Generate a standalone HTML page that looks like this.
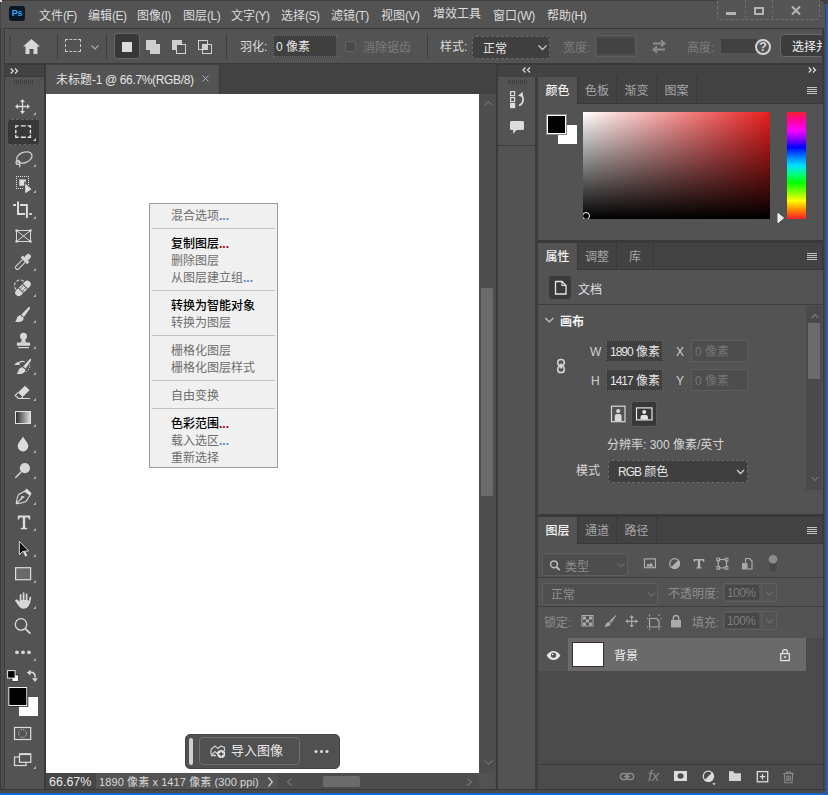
<!DOCTYPE html>
<html lang="zh-CN">
<head>
<meta charset="utf-8">
<title>Photoshop</title>
<style>
*{box-sizing:border-box;margin:0;padding:0}
html,body{width:828px;height:795px;overflow:hidden;background:#424242}
body{position:relative;font-family:"Liberation Sans","Noto Sans CJK SC",sans-serif;font-size:12px;color:#dcdcdc;line-height:1}
.a{position:absolute}
.t{position:absolute;white-space:nowrap;line-height:14px;height:14px}
.dim{color:#8c8c8c}
.l{letter-spacing:-0.5px}
.n{letter-spacing:-1px}
.p{background:#535353}
.d{background:#424242}
.sep{position:absolute;width:1px;background:#3d3d3d}
.hl{position:absolute;height:1px;background:#3d3d3d}
svg{position:absolute;overflow:visible}
.tab{position:absolute;height:27px;border-right:1px solid #383838;color:#a6a6a6;text-align:center;line-height:28px}
.tab.on{background:#535353;color:#f4f4f4;font-weight:500}
.inp{position:absolute;background:#3f3f3f;border:1px solid #6a6a6a;color:#e6e6e6;line-height:14px;padding-top:4px;padding-left:3px;white-space:nowrap;overflow:hidden}
.inp.off{background:#4d4d4d;border-color:#5e5e5e;color:#757575}
.dd{position:absolute;background:#3f3f3f;border:1px solid #666;border-radius:3px;color:#e6e6e6;white-space:nowrap;line-height:14px;padding-top:4px}
.mi{position:absolute;left:21px;white-space:nowrap;height:14px;line-height:14px;color:#000;font-size:12px}
.mi{font-weight:500}
.mi.g{color:#6d6d6d;font-weight:400}
.ms{position:absolute;left:2px;right:2px;height:1px;background:#c4c4c4}
.tri{position:absolute;width:0;height:0;border-left:3px solid transparent;border-bottom:3px solid #b8b8b8}
</style>
</head>
<body>

<!-- ===== menu bar ===== -->
<div class="a p" id="menubar" style="left:0;top:0;width:825px;height:28px;border-top:1px solid #404040;border-left:1px solid #454545;border-top-right-radius:5px"></div>
<div class="a" style="left:0;top:0;width:2px;height:2px;background:#d8d8d8"></div>
<div class="a" style="left:9px;top:6px;width:16px;height:15px;background:#0a1826;border-radius:3px;color:#31a8ff;font-size:9px;font-weight:bold;line-height:15px;text-align:center;letter-spacing:-0.3px">Ps</div>
<div class="t" style="left:39px;top:9px">文件<span class="l">(F)</span></div>
<div class="t" style="left:88px;top:9px">编辑<span class="l">(E)</span></div>
<div class="t" style="left:137px;top:9px">图像<span class="l">(I)</span></div>
<div class="t" style="left:183px;top:9px">图层<span class="l">(L)</span></div>
<div class="t" style="left:231px;top:9px">文字<span class="l">(Y)</span></div>
<div class="t" style="left:281px;top:9px">选择<span class="l">(S)</span></div>
<div class="t" style="left:331px;top:9px">滤镜<span class="l">(T)</span></div>
<div class="t" style="left:381px;top:9px">视图<span class="l">(V)</span></div>
<div class="t" style="left:433px;top:7px">增效工具</div>
<div class="t" style="left:493px;top:9px">窗口<span class="l">(W)</span></div>
<div class="t" style="left:547px;top:9px">帮助<span class="l">(H)</span></div>
<!-- window controls -->
<div class="a" style="left:717px;top:-4px;width:103px;height:24px;background:#555;border:1px dashed #727272;border-radius:4px"></div>
<div class="a" style="left:745px;top:0;width:1px;height:19px;border-left:1px dashed #6e6e6e"></div>
<div class="a" style="left:772px;top:0;width:1px;height:19px;border-left:1px dashed #6e6e6e"></div>
<div class="a" style="left:726px;top:12px;width:10px;height:3px;background:#b4b4b4"></div>
<div class="a" style="left:754px;top:7px;width:10px;height:8px;border:2px solid #b4b4b4"></div>
<svg style="left:791px;top:6px" width="10" height="9" viewBox="0 0 10 9"><path d="M1 0.5 L9 8.5 M9 0.5 L1 8.5" stroke="#b4b4b4" stroke-width="2" fill="none"/></svg>

<!-- ===== options bar ===== -->
<div class="a" style="left:0;top:28px;width:828px;height:1px;background:#3a3a3a"></div>
<div class="a p" id="optbar" style="left:5px;top:29px;width:817px;height:34px"></div>
<div class="a" style="left:9px;top:37px;width:2px;height:20px;background:repeating-linear-gradient(#3c3c3c 0 1px,transparent 1px 2px)"></div>
<svg style="left:23px;top:39px" width="17" height="15" viewBox="0 0 17 15"><path d="M8.5 0 L17 7.5 L14.5 7.5 L14.5 15 L10.5 15 L10.5 10 L6.5 10 L6.5 15 L2.5 15 L2.5 7.5 L0 7.5 Z" fill="#d6d6d6"/></svg>
<div class="sep" style="left:57px;top:34px;height:25px"></div>
<div class="a" style="left:65px;top:39px;width:16px;height:13px;border:1.5px dashed #c8c8c8"></div>
<svg style="left:91px;top:45px" width="8" height="5" viewBox="0 0 8 5"><path d="M0.5 0.5 L4 4 L7.5 0.5" stroke="#a8a8a8" stroke-width="1.2" fill="none"/></svg>
<div class="sep" style="left:106px;top:34px;height:25px"></div>
<div class="a" style="left:114px;top:33px;width:26px;height:26px;background:#383838;border:1px solid #666;border-radius:3px"></div>
<div class="a" style="left:122px;top:42px;width:10px;height:10px;background:#dcdcdc"></div>
<!-- add -->
<div class="a" style="left:146px;top:40px;width:10px;height:10px;background:#cfcfcf"></div>
<div class="a" style="left:150px;top:44px;width:10px;height:10px;background:#cfcfcf"></div>
<!-- subtract -->
<div class="a" style="left:172px;top:40px;width:10px;height:10px;background:#cfcfcf"></div>
<div class="a" style="left:176px;top:44px;width:10px;height:10px;background:#535353;border:1.5px solid #cfcfcf"></div>
<!-- intersect -->
<div class="a" style="left:198px;top:40px;width:10px;height:10px;border:1.5px solid #cfcfcf"></div>
<div class="a" style="left:202px;top:44px;width:10px;height:10px;border:1.5px solid #cfcfcf"></div>
<div class="a" style="left:202px;top:44px;width:6px;height:6px;background:#cfcfcf"></div>
<div class="sep" style="left:226px;top:34px;height:25px"></div>
<div class="t" style="left:240px;top:40px">羽化:</div>
<div class="inp" style="left:273px;top:35px;width:64px;height:22px;border-style:dotted;padding-top:4px;padding-left:2px">0 像素</div>
<div class="a" style="left:345px;top:41px;width:11px;height:11px;background:#4a4a4a;border:1px solid #646464;border-radius:2px"></div>
<div class="t dim" style="left:363px;top:41px;color:#7c7c7c">消除锯齿</div>
<div class="sep" style="left:427px;top:34px;height:25px"></div>
<div class="t" style="left:440px;top:40px">样式:</div>
<div class="dd" style="left:472px;top:36px;width:78px;height:23px;border:1px dashed #6c6c6c;border-radius:4px;padding-top:5px;padding-left:10px">正常</div>
<svg style="left:538px;top:45px" width="9" height="6" viewBox="0 0 9 6"><path d="M0.5 0.5 L4.5 4.5 L8.5 0.5" stroke="#c8c8c8" stroke-width="1.3" fill="none"/></svg>
<div class="t dim" style="left:563px;top:41px;color:#7c7c7c">宽度:</div>
<div class="a" style="left:595px;top:35px;width:42px;height:22px;background:#4e4e4e;border:1px solid #5e5e5e"></div>
<div class="a" style="left:597px;top:38px;width:37px;height:16px;background:#434343"></div>
<svg style="left:651px;top:40px" width="16" height="13" viewBox="0 0 16 13"><path d="M2 3.5 H13 M10 0.5 L13.5 3.5 L10 6.5 M14 9.5 H3 M6 6.5 L2.5 9.5 L6 12.5" stroke="#8c8c8c" stroke-width="2" fill="none"/></svg>
<div class="t dim" style="left:687px;top:41px;color:#7c7c7c">高度:</div>
<div class="a" style="left:721px;top:39px;width:36px;height:14px;background:#414141"></div>
<div class="a" style="left:755px;top:39px;width:16px;height:16px;border:2px solid #d4d4d4;border-radius:50%;color:#d4d4d4;font-weight:bold;font-size:13px;line-height:12px;text-align:center">?</div>
<div class="a" style="left:780px;top:34px;width:50px;height:23px;background:#3c3c3c;border:1px solid #686868;border-radius:4px;color:#f0f0f0;line-height:14px;padding-top:5px;padding-left:11px;white-space:nowrap;overflow:hidden;font-size:12px">选择并遮住</div>
<div class="a" style="left:822px;top:28px;width:6px;height:767px;background:#4a4a4a;border-left:2px solid #3a3a3a"></div>
<div class="a" style="left:0;top:28px;width:5px;height:767px;background:#4d4d4d;border-left:1px solid #3a3a3a;border-right:1px solid #3c3c3c"></div>

<!-- ===== left toolbar ===== -->
<div class="a" style="left:5px;top:63px;width:817px;height:2px;background:#3a3a3a"></div>
<div class="a" style="left:5px;top:65px;width:39px;height:11px;background:#424242"></div>
<div class="a" style="left:5px;top:76px;width:39px;height:1px;background:#3a3a3a"></div>
<div class="a" style="left:44px;top:65px;width:2px;height:724px;background:#3a3a3a"></div>
<svg style="left:9.5px;top:67.5px" width="9" height="6" viewBox="0 0 9 6"><path d="M0.7 0.5 L3.2 3 L0.7 5.5 M5 0.5 L7.5 3 L5 5.5" stroke="#e0e0e0" stroke-width="1.2" fill="none"/></svg>
<div class="a p" id="toolbar" style="left:5px;top:77px;width:39px;height:712px"></div>
<div class="a" style="left:14px;top:80px;width:20px;height:4px;background:repeating-linear-gradient(90deg,#3e3e3e 0 1px,transparent 1px 2px)"></div>
<div class="a" style="left:8px;top:119px;width:31px;height:26px;background:#383838;border-top:1px dashed #666;border-bottom:1px dashed #666;border-radius:3px"></div>
<div class="a" style="left:15px;top:411px;width:16px;height:13px;border:1px solid #e2e2e2;background:linear-gradient(to right,#303030,#d8d8d8)"></div>
<svg id="toolsvg" style="left:0;top:0" width="50" height="795" viewBox="0 0 50 795" fill="none" stroke="none">
<g fill="#aaaaaa">
<path d="M36 112v3h-3z"/><path d="M36 138v3h-3z" fill="#d0d0d0"/><path d="M36 164v3h-3z"/><path d="M36 190v3h-3z"/><path d="M36 216v3h-3z"/>
<path d="M36 268v3h-3z"/><path d="M36 294v3h-3z"/><path d="M36 320v3h-3z"/><path d="M36 346v3h-3z"/><path d="M36 372v3h-3z"/><path d="M36 398v3h-3z"/>
<path d="M36 424v3h-3z"/><path d="M36 450v3h-3z"/><path d="M36 476v3h-3z"/><path d="M36 502v3h-3z"/><path d="M36 528v3h-3z"/><path d="M36 554v3h-3z"/>
<path d="M36 580v3h-3z"/><path d="M36 606v3h-3z"/><path d="M36 658v3h-3z"/><path d="M36 766v3h-3z"/>
</g>
<!-- move -->
<g stroke="#d8d8d8" stroke-width="1.300"><path d="M16.500 106.500H28.500M22.500 100.500V112.500"/></g>
<g fill="#d8d8d8"><path d="M22.500 99l2.500 3h-5zM22.500 114l2.500-3h-5zM15 106.500l3-2.500v5zM30 106.500l-3-2.500v5z"/></g>
<!-- marquee -->
<path d="M15.800 128v-2.100h2.800M27.600 125.900h2.800v2.100M30.400 135.100v2.100h-2.800M18.600 137.200h-2.800v-2.100M20.800 125.900h5M20.800 137.200h5M15.800 129.800v3.600M30.400 129.800v3.600" stroke="#e6e6e6" stroke-width="1.350"/>
<!-- lasso -->
<g stroke="#cfcfcf" stroke-width="1.300"><ellipse cx="24.300" cy="157.500" rx="8" ry="5.200" transform="rotate(-22 24.300 157.500)"/><circle cx="18" cy="162.500" r="1.900"/><path d="M19 164.200c1.200 0.800 1.200 2 0.300 3"/></g>
<!-- object select -->
<g stroke="#e6e6e6" stroke-width="1" stroke-dasharray="1 1" shape-rendering="crispEdges"><path d="M16 176.500h13M16 188.500h8M16.500 176v13M28.500 176v9"/></g>
<path d="M19.300 179.400h6.500v6.400h-6.500z" fill="#dcdcdc"/>
<path d="M25.200 183.600l6.300 5.700l-6.300 3.900z" fill="#dcdcdc" stroke="#535353" stroke-width="2" paint-order="stroke"/>
<!-- crop -->
<path d="M18 201.400v12.500h7M13.200 205h2.800M20 205h6.900v13M29.200 213.900h2.600" stroke="#dcdcdc" stroke-width="2"/>
<!-- frame -->
<g stroke="#d8d8d8" stroke-width="1"><rect x="16.500" y="230.500" width="14" height="11"/><path d="M16.500 230.500l14 11M30.500 230.500l-14 11"/></g>
<g fill="#d8d8d8"><rect x="15.400" y="229.400" width="2.200" height="2.200"/><rect x="29.400" y="229.400" width="2.200" height="2.200"/><rect x="15.400" y="240.400" width="2.200" height="2.200"/><rect x="29.400" y="240.400" width="2.200" height="2.200"/></g>
<!-- eyedropper -->
<g transform="translate(25 259.800) rotate(45)"><path d="M-1.900 1.500v9.300a1.900 1.900 0 0 0 3.800 0v-9.300" stroke="#d4d4d4" stroke-width="1.100"/><rect x="-4.600" y="-1.600" width="9.200" height="3.200" fill="#d4d4d4"/><rect x="-2.500" y="-7.200" width="5" height="6.500" rx="2.400" fill="#d4d4d4"/></g>
<!-- heal -->
<g transform="translate(23 288.400) rotate(-45)"><rect x="-9.500" y="-3.500" width="19" height="7" rx="3.500" fill="#d8d8d8"/><rect x="-3.300" y="-3.600" width="1" height="7.200" fill="#535353"/><rect x="2.300" y="-3.600" width="1" height="7.200" fill="#535353"/><rect x="-1.500" y="-2.200" width="1.100" height="1.100" fill="#535353"/><rect x="0.500" y="-2.200" width="1.100" height="1.100" fill="#535353"/><rect x="-1.500" y="1.100" width="1.100" height="1.100" fill="#535353"/><rect x="0.500" y="1.100" width="1.100" height="1.100" fill="#535353"/></g>
<path d="M16.300 289.800a5.300 5.300 0 0 1 7.700 -8.300" stroke="#d0d0d0" stroke-width="1.100" stroke-dasharray="3 1.700"/>
<!-- brush -->
<path d="M29.700 306.800c0.600 0.500 0.400 1.400-0.200 2.400l-5.600 7.800l-2.700-2.300l7-7.300c0.600-0.600 1.100-0.900 1.500-0.600z" fill="#d8d8d8"/>
<path d="M20.700 315.300l2.800 2.400c0.500 1.600-0.600 3.100-2.500 3.800c-1.900 0.700-4.300 0.700-6 0.300c1.300-0.900 1.400-2 1.700-3.300c0.400-1.800 1.900-3.100 4-3.200z" fill="#d8d8d8"/>
<!-- stamp -->
<g fill="#d8d8d8"><circle cx="23.500" cy="336.300" r="3.500"/><path d="M21.700 338.500h3.600c-0.300 1.800 0.200 3.300 1.500 4.300h-6.600c1.300-1 1.800-2.500 1.500-4.300z"/><path d="M17.800 342.500h11.400a0.900 0.900 0 0 1 0.900 0.900v2.400h-13.200v-2.400a0.900 0.900 0 0 1 0.900-0.900z"/><rect x="18.200" y="347" width="10.800" height="1.200"/></g>
<!-- history brush -->
<path d="M30.800 358.800c0.600 0.400 0.400 1.300-0.100 2.200l-4.900 7.600l-2.700-2l6.300-7.200c0.500-0.600 1-0.900 1.400-0.600z" fill="#d8d8d8"/>
<path d="M22.500 367.300l2.800 2.100c0.400 1.600-0.500 3-2.300 3.800c-1.800 0.800-4.300 1-6.500 0.700c1.200-0.900 1.400-1.900 1.800-3.200c0.500-1.800 2.100-3.200 4.200-3.400z" fill="#d8d8d8"/>
<path d="M18.500 363.300c1.700-1.900 4-2.300 6.200-1.500" stroke="#d8d8d8" stroke-width="1.200"/><path d="M14 364.900l4-3.500l2.100 3.700z" fill="#d8d8d8"/>
<g fill="#c8c8c8"><circle cx="29.600" cy="365.100" r="0.600"/><circle cx="29.600" cy="367.200" r="0.600"/><circle cx="28.500" cy="369.400" r="0.600"/><circle cx="26.600" cy="371.600" r="0.600"/></g>
<!-- eraser -->
<path d="M25 385.800l4.600 4.400l-7 6.900l-4.600-4.500z" fill="#dcdcdc"/>
<path d="M18.200 392.400l-3 3l3.200 3.100h11.600M22.800 396.900l-1.700 1.600" stroke="#dcdcdc" stroke-width="1.100"/>
<!-- gradient -->
<!-- blur -->
<path d="M23 436.500c1.500 3.300 5.300 6.300 5.300 9.600a5.300 5.300 0 0 1-10.600 0c0-3.300 3.800-6.300 5.300-9.600z" fill="#dcdcdc"/>
<!-- dodge -->
<circle cx="24.900" cy="468.200" r="5.100" fill="#d8d8d8"/><path d="M21.300 471.700l-6 6" stroke="#d8d8d8" stroke-width="1.400"/>
<!-- pen -->
<g stroke="#dcdcdc" stroke-width="1.100" stroke-linejoin="round"><path d="M16.200 503.600q0.500-5.600 2.400-9l6-3.400l5.600 3.800l-4.200 6.500q-4.500 1.800-9.800 2.100z"/><path d="M16.600 503.200l5-4.800"/></g>
<path d="M21 499.200l0.600-2.800l2.600 0.400z" fill="#dcdcdc" stroke="#dcdcdc" stroke-width="0.800" stroke-linejoin="round"/>
<path d="M24.300 491l2.300-2.400l5 4.700l-1.500 2z" fill="#dcdcdc"/>
<!-- type -->
<path d="M17.800 515.500h12.400v4h-1.300c-0.200-1.600-0.700-2.100-2-2.100h-1.700v9.400c0 0.900 0.400 1.200 2 1.300v1.100h-6.400v-1.100c1.600-0.100 2-0.400 2-1.300v-9.400h-1.700c-1.300 0-1.800 0.500-2 2.100h-1.300z" fill="#dcdcdc"/>
<!-- path select -->
<path d="M22.800 551.300l2.500 5.300l2-0.900l-2.500-5.300z" fill="#e0e0e0"/>
<path d="M19.300 541.300v13.300l3.500-3.200l5.700-0.500z" fill="#0a0a0a" stroke="#d8d8d8" stroke-width="1" stroke-linejoin="round"/>
<!-- rectangle -->
<rect x="15.600" y="567.700" width="15" height="12" fill="#696969" stroke="#dcdcdc" stroke-width="1.200"/>
<!-- hand -->
<g stroke="#d8d8d8" stroke-width="1.700" stroke-linecap="round"><path d="M20.600 594.800v7M23.600 593.100v8M26.600 594.400v7M30.400 597.500l-1.200 5.500"/></g>
<path d="M19.750 600h7.700l2.600 1.500c-0.400 2.500-1.100 4.300-2.300 5.600c-1.100 1.100-2.500 1.600-4.200 1.600c-2.300 0-3.900-1.200-5.200-3.200c-1.200-1.900-2.100-3.600-3.300-4.600c0.300-1.300 1.500-1.700 2.700-0.800l2 2z" fill="#d8d8d8"/>
<!-- zoom -->
<circle cx="21" cy="624.400" r="5.700" stroke="#d8d8d8" stroke-width="1.300"/><path d="M25.200 628.600l5.200 5" stroke="#d8d8d8" stroke-width="1.800"/>
<!-- dots -->
<g fill="#d4d4d4"><circle cx="17" cy="652.300" r="1.900"/><circle cx="23" cy="652.300" r="1.900"/><circle cx="29" cy="652.300" r="1.900"/></g>
<!-- default colors -->
<rect x="12" y="675" width="6.500" height="6.500" fill="#fff" stroke="#000" stroke-width="0.600"/>
<rect x="7.600" y="670.600" width="7.500" height="7.500" fill="#050505" stroke="#e6e6e6" stroke-width="1"/>
<!-- swap -->
<path d="M30 672.300c3.500-0.300 5.300 1.500 5.200 5.200" stroke="#d8d8d8" stroke-width="1.600"/>
<path d="M26.800 672.700l3.800-3v5.800zM35 682l-3-3.800h5.800z" fill="#d8d8d8"/>
<!-- fg/bg -->
<rect x="19" y="697" width="19" height="19" fill="#fff"/>
<rect x="8.300" y="687" width="20" height="19.800" fill="#2c2c2c"/>
<rect x="8.800" y="687.500" width="18" height="18" fill="#050202" stroke="#f0f0f0" stroke-width="1"/>
<!-- quick mask -->
<rect x="14.500" y="727.500" width="16.200" height="12" stroke="#dcdcdc" stroke-width="1.200"/>
<circle cx="22.600" cy="733.400" r="3.900" stroke="#e0e0e0" stroke-width="1" stroke-dasharray="0.900 1.140"/>
<!-- screen mode -->
<rect x="14.500" y="757" width="11.500" height="8.500" stroke="#dcdcdc" stroke-width="1.200"/>
<rect x="19.500" y="754" width="11.300" height="8.300" fill="#535353" stroke="#dcdcdc" stroke-width="1.200"/>
<path d="M19.500 754.200h11.300" stroke="#dcdcdc" stroke-width="1.800"/>
</svg>


<!-- ===== document area ===== -->
<div class="a d" style="left:46px;top:64px;width:450px;height:30px"></div>
<div class="a" style="left:496px;top:64px;width:2px;height:725px;background:#3a3a3a"></div>
<div class="a" style="left:535px;top:77px;width:3px;height:712px;background:#3c3c3c"></div>
<div class="a p" style="left:46px;top:65px;width:174px;height:29px;border-right:1px solid #383838"></div>
<div class="t" style="left:56px;top:73px;color:#e4e4e4">未标题<span style="letter-spacing:-0.35px">-1 @ 66.7%(RGB/8)</span></div>
<svg style="left:202px;top:75px" width="7" height="7" viewBox="0 0 7 7"><path d="M0.5 0.5 L6.5 6.5 M6.5 0.5 L0.5 6.5" stroke="#b0b0b0" stroke-width="1" fill="none"/></svg>
<div class="a" style="left:46px;top:94px;width:433px;height:679px;background:#fff"></div>
<!-- v scrollbar -->
<div class="a" style="left:479px;top:94px;width:17px;height:679px;background:#4d4d4d"></div>
<svg style="left:484px;top:101px" width="9" height="5" viewBox="0 0 9 5"><path d="M0.5 4.5 L4.5 0.5 L8.5 4.5" stroke="#6e6e6e" stroke-width="1.2" fill="none"/></svg>
<svg style="left:484px;top:760px" width="9" height="5" viewBox="0 0 9 5"><path d="M0.5 0.5 L4.5 4.5 L8.5 0.5" stroke="#6e6e6e" stroke-width="1.2" fill="none"/></svg>
<div class="a" style="left:481px;top:288px;width:12px;height:208px;background:#6b6b6b;border-radius:1px"></div>
<!-- status bar -->
<div class="a p" style="left:46px;top:773px;width:450px;height:16px"></div>
<div class="a" style="left:46px;top:773px;width:50px;height:16px;background:#464646"></div>
<div class="t" style="left:49px;top:775px;font-size:12.5px;color:#e8e8e8">66.67%</div>
<div class="t" style="left:99px;top:775px;font-size:11px;color:#d8d8d8;letter-spacing:0.1px">1890 像素 x 1417 像素 (300 ppi)</div>
<svg style="left:268px;top:777px" width="5" height="10" viewBox="0 0 5 10"><path d="M0.5 0.5 L4.3 5 L0.5 9.500" stroke="#d0d0d0" stroke-width="1.2" fill="none"/></svg>
<div class="a" style="left:278px;top:773px;width:218px;height:16px;background:#4d4d4d"></div>
<div class="a" style="left:479px;top:773px;width:16px;height:16px;background:#525252"></div>
<svg style="left:287px;top:778px" width="5" height="8" viewBox="0 0 5 8"><path d="M4.5 0.5 L0.5 4 L4.5 7.5" stroke="#747474" stroke-width="1.2" fill="none"/></svg>
<svg style="left:467px;top:778px" width="5" height="8" viewBox="0 0 5 8"><path d="M0.5 0.5 L4.5 4 L0.5 7.5" stroke="#747474" stroke-width="1.2" fill="none"/></svg>
<div class="a" style="left:323px;top:776px;width:37px;height:11px;background:#6b6b6b;border-radius:2px"></div>

<!-- contextual task bar -->
<div class="a" style="left:185px;top:734px;width:155px;height:35px;background:#505050;border:1px solid #444;border-radius:5px"></div>
<div class="a" style="left:189px;top:738px;width:4px;height:27px;background:#cfcfcf;border-radius:2px"></div>
<div class="a" style="left:199px;top:737px;width:101px;height:28px;border:1px solid #707070;border-radius:4px"></div>
<svg style="left:210px;top:744px" width="17" height="15" viewBox="0 0 17 15" fill="none"><path d="M1 10.500v-5l4-3.500l3 2.500l3-2.500l3.500 1.500v3.500" stroke="#d0d0d0" stroke-width="1.200"/><path d="M1.500 11l3.500-3.500l2 2l1.500-1.500" stroke="#d0d0d0" stroke-width="1.200"/><path d="M1 11.500h5" stroke="#d0d0d0" stroke-width="1.600"/><circle cx="11.200" cy="10" r="4" fill="#e0e0e0"/><path d="M11.200 7.700v4.600M8.900 10h4.600" stroke="#4a4a4a" stroke-width="1.300"/></svg>
<div class="t" style="left:231px;top:744px;font-size:13px;color:#e8e8e8">导入图像</div>
<svg style="left:314px;top:749px" width="15" height="5" viewBox="0 0 15 5"><circle cx="2" cy="2.500" r="1.500" fill="#e0e0e0"/><circle cx="7.500" cy="2.500" r="1.500" fill="#e0e0e0"/><circle cx="13" cy="2.500" r="1.500" fill="#e0e0e0"/></svg>

<!-- ===== context menu ===== -->
<div class="a" id="ctx" style="left:149px;top:203px;width:129px;height:265px;background:#f0f0f0;border:1px solid #9a9a9a;font-family:'Liberation Sans','Noto Sans CJK SC',sans-serif">
<div class="mi g" style="top:5px">混合选项<span style="color:#5c86c4;font-weight:bold">...</span></div>
<div class="ms" style="top:24px"></div>
<div class="mi" style="top:33px">复制图层<span style="color:#a00000;font-weight:bold">...</span></div>
<div class="mi g" style="top:50px">删除图层</div>
<div class="mi g" style="top:67px">从图层建立组<span style="color:#5c86c4;font-weight:bold">...</span></div>
<div class="ms" style="top:86px"></div>
<div class="mi" style="top:95px">转换为智能对象</div>
<div class="mi g" style="top:112px">转换为图层</div>
<div class="ms" style="top:131px"></div>
<div class="mi g" style="top:140px">栅格化图层</div>
<div class="mi g" style="top:157px">栅格化图层样式</div>
<div class="ms" style="top:176px"></div>
<div class="mi g" style="top:185px">自由变换</div>
<div class="ms" style="top:204px"></div>
<div class="mi" style="top:213px">色彩范围<span style="color:#a00000;font-weight:bold">...</span></div>
<div class="mi g" style="top:230px">载入选区<span style="color:#5c86c4;font-weight:bold">...</span></div>
<div class="mi g" style="top:247px">重新选择</div>
</div>

<!-- ===== right dock ===== -->
<svg style="left:522px;top:67px" width="9" height="6" viewBox="0 0 9 6"><path d="M3.5 0.5 L1 3 L3.5 5.5 M8 0.5 L5.5 3 L8 5.5" stroke="#e0e0e0" stroke-width="1.2" fill="none"/></svg>
<svg style="left:808px;top:67px" width="9" height="6" viewBox="0 0 9 6"><path d="M0.7 0.5 L3.2 3 L0.7 5.5 M5 0.5 L7.5 3 L5 5.5" stroke="#e0e0e0" stroke-width="1.2" fill="none"/></svg>
<div class="a p" id="iconstrip" style="left:498px;top:77px;width:37px;height:712px"></div>
<div class="a" style="left:508px;top:80px;width:20px;height:4px;background:repeating-linear-gradient(90deg,#3e3e3e 0 1px,transparent 1px 2px)"></div>
<div class="hl" style="left:498px;top:145px;width:37px"></div>

<!-- color panel -->
<div class="a d" style="left:538px;top:77px;width:284px;height:27px;border-bottom:1px solid #383838"></div>
<div class="a p" id="colorpanel" style="left:538px;top:104px;width:285px;height:136px"></div>
<div class="tab on" style="left:538px;top:77px;width:40px">颜色</div>
<div class="tab" style="left:578px;top:77px;width:39px">色板</div>
<div class="tab" style="left:617px;top:77px;width:40px">渐变</div>
<div class="tab" style="left:657px;top:77px;width:40px">图案</div>

<!-- properties panel -->
<div class="a" style="left:538px;top:240px;width:284px;height:3px;background:#3a3a3a"></div>
<div class="a" style="left:538px;top:514px;width:284px;height:3px;background:#3a3a3a"></div>
<div class="a d" style="left:538px;top:243px;width:284px;height:27px;border-bottom:1px solid #383838"></div>
<div class="a p" id="proppanel" style="left:538px;top:270px;width:285px;height:244px"></div>
<div class="tab on" style="left:538px;top:243px;width:40px">属性</div>
<div class="tab" style="left:578px;top:243px;width:39px">调整</div>
<div class="tab" style="left:617px;top:243px;width:37px">库</div>

<!-- layers panel -->
<div class="a d" style="left:538px;top:517px;width:284px;height:27px;border-bottom:1px solid #383838"></div>
<div class="a p" id="layerpanel" style="left:538px;top:544px;width:285px;height:245px"></div>
<div class="tab on" style="left:538px;top:517px;width:40px">图层</div>
<div class="tab" style="left:578px;top:517px;width:39px">通道</div>
<div class="tab" style="left:617px;top:517px;width:40px">路径</div>

<!-- ===== right panel contents ===== -->
<!-- color panel -->
<div class="a" style="left:558px;top:125px;width:19px;height:19px;background:#fff"></div>
<div class="a" style="left:546px;top:114px;width:21px;height:21px;background:#050202;border:1px solid #8c8c8c;box-shadow:inset 0 0 0 1px #fff"></div>
<div class="a" style="left:583px;top:112px;width:187px;height:107px;background:linear-gradient(to top,#000 0%,rgba(0,0,0,0) 100%),linear-gradient(to right,#fff 0%,#e81e1e 100%)"></div>
<div class="a" style="left:787px;top:112px;width:19px;height:107px;background:linear-gradient(to bottom,#f02030 0%,#ff00a0 8%,#ff00ff 17%,#8000ff 26%,#0000ff 33%,#0080ff 42%,#00e0ff 50%,#00ff80 58%,#00ff00 66%,#80ff00 75%,#ffff00 83%,#ff8000 92%,#f02030 100%)"></div>
<div class="a" style="left:582px;top:212px;width:8px;height:8px;border:1px solid #fff;border-radius:50%;clip-path:inset(0 0 1px 1px)"></div>

<!-- properties panel -->
<div class="a" style="left:549px;top:276px;width:22px;height:23px;background:#3a3a3a;border-radius:3px"></div>
<div class="t" style="left:578px;top:283px;color:#e0e0e0">文档</div>
<div class="hl" style="left:538px;top:304px;width:285px"></div>
<div class="t" style="left:560px;top:315px;color:#f4f4f4;font-weight:bold">画布</div>
<div class="t" style="left:590px;top:345px;color:#d0d0d0">W</div>
<div class="inp" style="left:606px;top:340px;width:57px;height:22px;border-style:dotted"><span class="n">1890</span> 像素</div>
<div class="t" style="left:676px;top:345px;color:#d0d0d0">X</div>
<div class="inp off" style="left:691px;top:340px;width:57px;height:22px">0 像素</div>
<div class="t" style="left:591px;top:374px;color:#d0d0d0">H</div>
<div class="inp" style="left:606px;top:369px;width:57px;height:22px;border-style:dotted"><span class="n">1417</span> 像素</div>
<div class="t" style="left:676px;top:374px;color:#d0d0d0">Y</div>
<div class="inp off" style="left:691px;top:369px;width:57px;height:22px">0 像素</div>
<div class="a" style="left:631px;top:401px;width:26px;height:26px;background:#383838;border:1px solid #5a5a5a;border-radius:3px"></div>
<div class="t" style="left:607px;top:438px;color:#d6d6d6">分辨率: 300 像素/英寸</div>
<div class="t" style="left:576px;top:464px;color:#d6d6d6">模式</div>
<div class="dd" style="left:608px;top:460px;width:140px;height:23px;border:1px dashed #6c6c6c;border-radius:4px;padding-left:9px"><span class="n">RGB</span> 颜色</div>
<div class="a" style="left:806px;top:306px;width:16px;height:184px;background:#4a4a4a"></div>
<div class="a" style="left:808px;top:323px;width:12px;height:56px;background:#6b6b6b"></div>

<!-- layers panel -->
<div class="a" style="left:542px;top:553px;width:86px;height:23px;background:#4d4d4d;border:1px solid #5f5f5f;border-radius:3px"></div>
<div class="t dim" style="left:565px;top:560px;color:#8e8e8e">类型</div>
<div class="hl" style="left:538px;top:577px;width:285px"></div>
<div class="a" style="left:542px;top:583px;width:116px;height:22px;background:#4f4f4f;border:1px solid #5f5f5f;border-radius:3px"></div>
<div class="t dim" style="left:551px;top:588px;color:#8e8e8e">正常</div>
<div class="t dim" style="left:668px;top:587px;color:#8e8e8e">不透明度:</div>
<div class="a" style="left:723px;top:583px;width:54px;height:19px;border:1px solid #5f5f5f;border-radius:2px"></div>
<div class="a" style="left:725px;top:585px;width:34px;height:15px;background:#474747"></div>
<div class="a" style="left:761px;top:584px;width:1px;height:17px;background:#5f5f5f"></div>
<div class="t dim" style="left:727px;top:586px;color:#7e7e7e;letter-spacing:-0.6px">100%</div>
<div class="hl" style="left:538px;top:606px;width:285px"></div>
<div class="t dim" style="left:544px;top:616px;color:#8e8e8e">锁定:</div>
<div class="t dim" style="left:692px;top:616px;color:#8e8e8e">填充:</div>
<div class="a" style="left:723px;top:611px;width:54px;height:19px;border:1px solid #5f5f5f;border-radius:2px"></div>
<div class="a" style="left:725px;top:613px;width:34px;height:15px;background:#474747"></div>
<div class="a" style="left:761px;top:612px;width:1px;height:17px;background:#5f5f5f"></div>
<div class="t dim" style="left:727px;top:614px;color:#7e7e7e;letter-spacing:-0.6px">100%</div>
<div class="a" style="left:538px;top:638px;width:285px;height:151px;background:#4b4b4b"></div>
<div class="a p" style="left:538px;top:638px;width:30px;height:33px"></div>
<div class="a" style="left:568px;top:638px;width:238px;height:33px;background:#6a6a6a"></div>
<div class="a" style="left:572px;top:642px;width:32px;height:25px;background:#fff;border:1px solid #3a2a2a"></div>
<div class="t" style="left:614px;top:649px;color:#f0f0f0">背景</div>
<div class="hl" style="left:538px;top:764px;width:285px;background:#3a3a3a"></div>
<div class="t" style="left:648px;top:769px;color:#8a8a8a;font-style:italic;font-size:15px;font-family:'Liberation Sans',sans-serif;letter-spacing:-0.5px">fx</div>

<svg id="ricons" style="left:0;top:0" width="828" height="795" viewBox="0 0 828 795" fill="none">
<!-- history icon -->
<g stroke="#dcdcdc" stroke-width="1.200"><rect x="510.600" y="91.600" width="4" height="4"/><rect x="510.600" y="97.600" width="4" height="4"/></g>
<rect x="510" y="103" width="5.200" height="5.200" fill="#dcdcdc"/>
<path d="M519 105.500c4.500-1.500 5.500-7 2-11" stroke="#dcdcdc" stroke-width="1.700"/><path d="M518 95.800l4.500-4l0.800 5.500z" fill="#dcdcdc"/>
<!-- comment -->
<path d="M511.500 121h11a1.500 1.500 0 0 1 1.500 1.500v6a1.500 1.500 0 0 1-1.500 1.500h-6l-3.300 4v-4h-1.700a1.500 1.500 0 0 1-1.500-1.500v-6a1.500 1.500 0 0 1 1.500-1.500z" fill="#dcdcdc"/>
<!-- panel menus -->
<g stroke="#c4c4c4" stroke-width="1"><path d="M807 87.500h10M807 89.500h10M807 91.500h10M807 93.500h10"/><path d="M807 253.500h10M807 255.500h10M807 257.500h10M807 259.500h10"/><path d="M807 527.500h10M807 529.500h10M807 531.500h10M807 533.500h10"/></g>
<!-- hue slider -->
<path d="M778 213.500l5.500 4.500l-5.500 4.500z" fill="#e8e8e8" stroke="#fff" stroke-width="1" stroke-linejoin="round"/>
<!-- doc icon -->
<path d="M555.500 281.500h6.500l4 4v8.500h-10.500z" stroke="#e6e6e6" stroke-width="1.300"/><path d="M562 281.500v4h4" stroke="#e6e6e6" stroke-width="1.100"/>
<!-- chevron -->
<path d="M545.300 318l4 4l4-4" stroke="#c8c8c8" stroke-width="1.200"/>
<!-- link -->
<g stroke="#d8d8d8" stroke-width="1.500"><rect x="557.700" y="359.400" width="6.600" height="6.400" rx="3.200"/><rect x="557.700" y="366.200" width="6.600" height="6.400" rx="3.200"/><path d="M561 363.500v5" stroke-width="1.800"/></g>
<!-- portrait -->
<rect x="611.500" y="406.200" width="13.500" height="15.500" stroke="#d8d8d8" stroke-width="1.200"/>
<circle cx="618.200" cy="411" r="2.100" fill="#d8d8d8"/><path d="M614.800 421v-5a2 2 0 0 1 2-2h2.800a2 2 0 0 1 2 2v5z" fill="#d8d8d8"/>
<!-- landscape -->
<rect x="636.500" y="407.900" width="15.500" height="12" stroke="#e6e6e6" stroke-width="1.200"/>
<circle cx="644.200" cy="412" r="2" fill="#e6e6e6"/><path d="M640.500 419.500v-2.500a2 2 0 0 1 2-2h3.400a2 2 0 0 1 2 2v2.500z" fill="#e6e6e6"/>
<!-- dropdown chevrons -->
<path d="M737 470l3.500 3.500l3.500-3.500" stroke="#d0d0d0" stroke-width="1.300"/>
<path d="M811.500 318l3.500-3.500l3.500 3.500" stroke="#7a7a7a" stroke-width="1.200"/>
<path d="M811.500 477l3.500 3.500l3.500-3.500" stroke="#6e6e6e" stroke-width="1.200"/>
<!-- search -->
<circle cx="554" cy="564.300" r="3.400" stroke="#bcbcbc" stroke-width="1.500"/><path d="M556.500 567l3.200 3.200" stroke="#bcbcbc" stroke-width="1.900"/>
<path d="M617.500 563.500l3.500 3.500l3.500-3.500" stroke="#6a6a6a" stroke-width="1.200"/>
<!-- filter icons -->
<rect x="644.400" y="558.900" width="11" height="8.800" stroke="#b2b2b2" stroke-width="1.100"/><path d="M646 566.500l2-3l1.300 1.800l1.700-2.800l2.600 4z" fill="#b2b2b2"/>
<circle cx="674.700" cy="563.600" r="5" stroke="#b2b2b2" stroke-width="1.100"/><path d="M671.200 567.200a5 5 0 0 0 7-7z" fill="#b2b2b2"/>
<path d="M693.700 559h10.600v3h-1c-0.200-1.300-0.600-1.600-1.600-1.600h-1.500v6c0 0.700 0.300 0.900 1.500 1v1h-5.400v-1c1.200-0.100 1.500-0.300 1.500-1v-6h-1.500c-1 0-1.400 0.300-1.600 1.600h-1z" fill="#b2b2b2"/>
<g stroke="#b2b2b2" stroke-width="1.100"><rect x="718.200" y="559.500" width="8.400" height="8.400"/></g>
<g fill="#535353" stroke="#b2b2b2" stroke-width="1"><rect x="716.900" y="558.200" width="2.600" height="2.600"/><rect x="725.300" y="558.200" width="2.600" height="2.600"/><rect x="716.900" y="566.600" width="2.600" height="2.600"/><rect x="725.300" y="566.600" width="2.600" height="2.600"/></g>
<path d="M745.500 558.500h4l2.500 2.500v8h-4.500M745.500 558.500v4" stroke="#b2b2b2" stroke-width="1.100"/><rect x="742" y="563" width="5.500" height="6.500" fill="#a8a8a8"/>
<rect x="768.500" y="555" width="9" height="17.500" rx="4.500" fill="#494949" stroke="#5a5a5a" stroke-width="0.800"/><circle cx="773" cy="559.300" r="4.300" fill="#8c8c8c"/>
<path d="M648 592.500l3.500 3.500l3.500-3.500" stroke="#6a6a6a" stroke-width="1.200"/>
<path d="M766 591.500l3.500 3.500l3.500-3.500" stroke="#6a6a6a" stroke-width="1.200"/>
<path d="M766 619.500l3.500 3.500l3.500-3.500" stroke="#6a6a6a" stroke-width="1.200"/>
<!-- lock icons -->
<g fill="#ababab"><rect x="582" y="615.500" width="11" height="10.500" fill="none" stroke="#ababab" stroke-width="1"/><rect x="583" y="616.500" width="3" height="3"/><rect x="589" y="616.500" width="3" height="3"/><rect x="586" y="619.500" width="3" height="3"/><rect x="583" y="622.500" width="3" height="3"/><rect x="589" y="622.500" width="3" height="3"/></g>
<path d="M615.800 615c0.500 0.400 0.300 1.100-0.200 1.800l-4.300 6l-1.900-1.600z" fill="#ababab"/><path d="M608.800 621.800l2 1.700c-0.500 2.500-3.500 3.500-6.800 3.100c1.900-0.900 1.900-4 4.800-4.800z" fill="#ababab"/>
<g stroke="#ababab" stroke-width="1.200"><path d="M627 621.300h9.500M631.700 616.500v9.500"/></g>
<path d="M631.700 615l2.300 2.700h-4.600zM631.700 627.600l2.300-2.700h-4.600zM625.300 621.300l2.700-2.300v4.600zM638.100 621.300l-2.700-2.300v4.600z" fill="#ababab"/>
<path d="M649.500 618.500h7l2.500 2.500v6h-9.500z" stroke="#ababab" stroke-width="1.200"/><path d="M649.500 614.500v2M647 618.500h1M659 614.500v1.500M661.500 618.500h-1M649.500 628.500v1.500M647 627h1M659 628.500v1.500M661.500 627h-1" stroke="#ababab" stroke-width="1.100"/>
<rect x="671" y="620" width="10" height="7.500" rx="0.800" fill="#ababab"/><path d="M673.300 620v-1.800a2.700 2.700 0 0 1 5.400 0v1.800" stroke="#ababab" stroke-width="1.400"/>
<!-- eye -->
<path d="M546.600 655.500c2-3 4.300-4.500 6.900-4.500s4.900 1.500 6.900 4.500c-2 3-4.300 4.500-6.900 4.500s-4.900-1.500-6.900-4.500z" fill="#e8e8e8"/><circle cx="553.500" cy="655.200" r="2.600" fill="#535353"/><circle cx="552.700" cy="654.300" r="0.900" fill="#e8e8e8"/>
<!-- layer lock -->
<rect x="780.700" y="653.600" width="8.600" height="7" stroke="#e8e8e8" stroke-width="1.200"/><path d="M782.600 653.500v-1.500a2.400 2.400 0 0 1 4.800 0v1.500" stroke="#e8e8e8" stroke-width="1.200"/><rect x="784.300" y="656" width="1.400" height="2" fill="#e8e8e8"/>
<!-- bottom icons -->
<g stroke="#8c8c8c" stroke-width="1.300"><rect x="620.400" y="773.500" width="7.500" height="6" rx="3"/><rect x="626.200" y="773.500" width="7.500" height="6" rx="3"/><path d="M624 776.500h6"/></g>
<rect x="674" y="771" width="13" height="10" fill="#dcdcdc"/><ellipse cx="680.500" cy="776" rx="3" ry="2.800" fill="#4b4b4b"/>
<circle cx="708.400" cy="776.300" r="5.200" stroke="#dcdcdc" stroke-width="1.200"/><path d="M704.700 780a5.200 5.200 0 0 0 7.400-7.400z" fill="#dcdcdc"/><path d="M712.300 783.200h3.400l-1.700 2z" fill="#e8e8e8"/>
<path d="M729 772h4.500l1 1.300h6.500v7.700h-12z" fill="#d4d4d4"/><path d="M729 771.700h4.500" stroke="#d4d4d4" stroke-width="1"/>
<rect x="757.300" y="771.600" width="10.400" height="10.200" stroke="#dcdcdc" stroke-width="1.300"/><path d="M759.800 776.700h5.400M762.500 774v5.400" stroke="#dcdcdc" stroke-width="1.300"/>
<g stroke="#8c8c8c" stroke-width="1.100"><path d="M783 773.500h11M786.500 773.500v-1.500h4v1.500M784.300 773.500l0.700 9.300h7l0.700-9.300M786.800 775.500v5.500M788.500 775.500v5.500M790.200 775.500v5.500"/></g>
</svg>

<!-- bottom strip -->
<div class="a" style="left:0;top:789px;width:828px;height:4px;background:#4a4a4a;border-top:1px solid #383838"></div>
<div class="a" style="left:0;top:793px;width:828px;height:2px;background:#1068d0"></div>
<div class="a" style="left:826px;top:4px;width:2px;height:791px;background:#1f5fc8"></div>
</body>
</html>
